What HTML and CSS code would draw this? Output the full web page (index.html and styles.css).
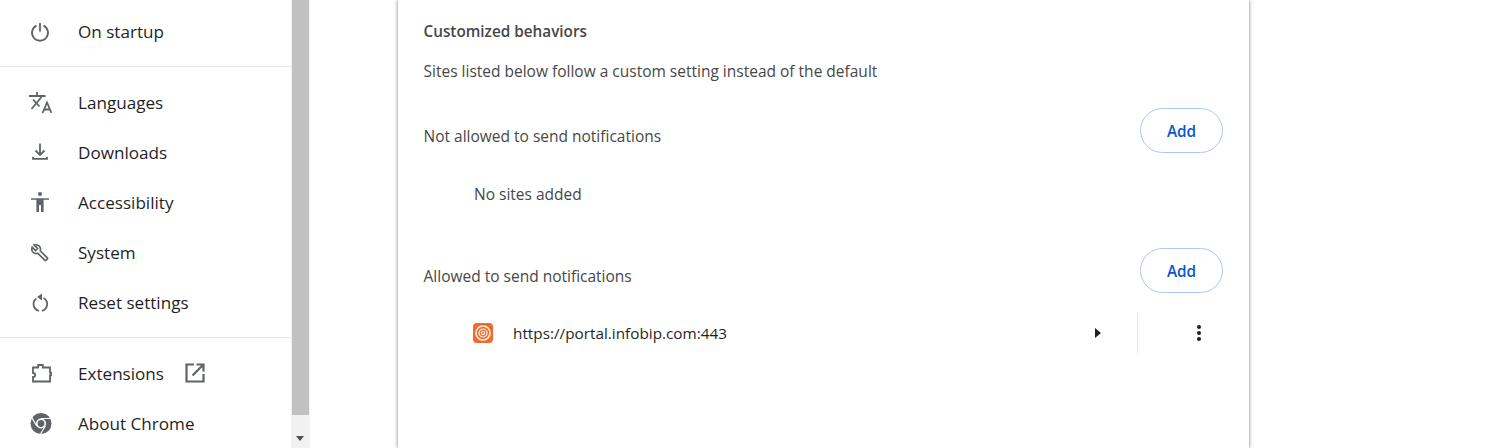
FILE: index.html
```html
<!DOCTYPE html>
<html>
<head>
<meta charset="UTF-8">
<title>Settings - Notifications</title>
<link rel="stylesheet" href="styles.css">
</head>
<body>
	<div id="container">

		<!-- left menu -->
		<div class="sidebar">
			<div class="menu-item">
				<svg class="menu-icon" viewBox="0 0 24 24"><path class="line" d="M8.400 6.600A8 8 0 1 0 15.600 6.600M12 4v8.500"/></svg>
				<span>On startup</span>
			</div>
			<hr class="menu-line">
			<div class="menu-item">
				<svg class="menu-icon" viewBox="0 0 24 24"><path class="line" d="M1 6h16.500M9 2v4M3.500 19L13.500 7M5 9.500l6.500 7"/><path class="line" d="M14.500 23L19 12.500L23.500 23M16 19.500h6"/></svg>
				<span>Languages</span>
			</div>
			<div class="menu-item">
				<svg class="menu-icon" viewBox="0 0 24 24"><path class="line" d="M12 3.500v11M7.500 10.500l4.500 4.500 4.500-4.500M5 17v1.900h14V17"/></svg>
				<span>Downloads</span>
			</div>
			<div class="menu-item">
				<svg class="menu-icon" viewBox="0 0 24 24"><circle class="solid" cx="12" cy="4" r="2"/><path class="solid" d="M3 8.200h18v1.600h-5.400V22h-2.600v-7h-2v7H8.400V9.800H3z"/></svg>
				<span>Accessibility</span>
			</div>
			<div class="menu-item">
				<svg class="menu-icon" viewBox="0 0 24 24"><path class="line" transform="translate(1 1) scale(.93)" d="M5.600 4.500l3.600 3.600-2.200 2.200-3.600-3.600c-.8 2-.4 4 1 5.400 1.400 1.400 3.300 1.700 5.100 1.100l7.600 7.600c.4.300.8.300 1.100 0l1.500-1.500c.3-.3.3-.8 0-1.100l-7.600-7.600c.6-1.800.3-3.700-1.100-5.100-1.400-1.400-3.400-1.800-5.400-.9z"/></svg>
				<span>System</span>
			</div>
			<div class="menu-item">
				<svg class="menu-icon" viewBox="0 0 24 24"><path class="line" d="M8.300 8.500A7 7 0 0 0 11 20.900M14 20.900A7 7 0 0 0 15.500 8"/><path class="solid" d="M14 3.500v7l-5-3.500z"/></svg>
				<span>Reset settings</span>
			</div>
			<hr class="menu-line">
			<div class="menu-item">
				<svg class="menu-icon" viewBox="0 0 24 24"><path class="line" d="M5 6.500h5.200V4h4.600v2.500H22v5.200h1v2.600h-1v6.200H5v-4.500c1.300 0 2.200-1 2.200-2s-.9-2-2.200-2z"/></svg>
				<span>Extensions</span>
				<svg class="menu-icon open-icon" viewBox="0 0 24 24"><path class="line thick" d="M11 3.500H3.500v17h17V13M13.500 3.500h7v7M20 4L9.500 14.500"/></svg>
			</div>
			<div class="menu-item">
				<svg class="menu-icon" viewBox="0 0 24 24"><circle class="solid" cx="13" cy="12.500" r="10.500"/><circle class="hole" cx="13" cy="12.500" r="5"/><circle class="solid" cx="13" cy="12.500" r="3.400"/><path class="cut" d="M13 7.500h10M8.700 15L3.800 6.500M17.300 15L12.500 23"/></svg>
				<span>About Chrome</span>
			</div>
		</div>

		<!-- page scrollbar of the menu -->
		<div class="scrollbar">
			<div class="scroll-thumb"></div>
			<div class="scroll-arrow"></div>
		</div>

		<div class="main">
			<div class="card">
				<div class="card-title">Customized behaviors</div>
				<div class="card-desc">Sites listed below follow a custom setting instead of the default</div>

				<div class="list-head first">
					<span>Not allowed to send notifications</span>
					<button class="add-btn">Add</button>
				</div>
				<div class="no-sites">No sites added</div>

				<div class="list-head second">
					<span>Allowed to send notifications</span>
					<button class="add-btn">Add</button>
				</div>
				<div class="site-row">
					<svg class="site-icon" viewBox="0 0 20 20">
						<rect class="site-bg" width="20" height="20" rx="4"/>
						<circle class="site-ring" cx="10" cy="10" r="7"/>
						<circle class="site-ring thin" cx="10" cy="10" r="4"/>
						<circle class="site-ring thin" cx="10" cy="10" r="1.600"/>
					</svg>
					<span class="site-url">https://portal.infobip.com:443</span>
					<div class="site-arrow"></div>
					<div class="site-sep"></div>
					<div class="site-more"><i></i><i></i><i></i></div>
				</div>
			</div>
		</div>

	</div>
</body>
</html>
```

FILE: styles.css
```css
body {
	margin: 0;
	padding: 0;
	background-color: #fff;
	font-family: "Open Sans", "Noto Sans", sans-serif;
	overflow: hidden;
}

#container {
	display: flex;
	height: 448px;
	overflow: hidden;
}

/* left menu */
.sidebar {
	width: 291px;
	flex-shrink: 0;
	padding-top: 6px;
	box-sizing: border-box;
}

.menu-item {
	display: flex;
	align-items: center;
	height: 50px;
	padding-left: 28px;
	font-size: 17.1px;
	font-weight: 500;
	color: #1f1f1f;
}

.menu-item span {
	margin-left: 26px;
}

.menu-icon {
	width: 24px;
	height: 24px;
	flex-shrink: 0;
}

.open-icon {
	margin-left: 19px;
}

.line {
	fill: none;
	stroke: #5f6368;
	stroke-width: 1.800;
}

.line.thick {
	stroke-width: 2.200;
}

.solid {
	fill: #5f6368;
}

.hole {
	fill: #fff;
}

.cut {
	fill: none;
	stroke: #fff;
	stroke-width: 1.200;
}

.menu-line {
	height: 1px;
	margin: 10px 0;
	border: none;
	background-color: #e8e8e8;
}

/* scrollbar */
.scrollbar {
	width: 19px;
	flex-shrink: 0;
	background-color: #f1f1f1;
}

.scroll-thumb {
	width: 17px;
	height: 415px;
	margin-left: 1px;
	background-color: #c1c1c1;
}

.scroll-arrow {
	width: 0;
	height: 0;
	margin: 21px 0 0 5px;
	border-left: 4.500px solid transparent;
	border-right: 4.500px solid transparent;
	border-top: 5px solid #505050;
}

/* content */
.main {
	flex: 1;
	padding-left: 88px;
}

.card {
	width: 851px;
	height: 448px;
	box-sizing: border-box;
	padding: 20px 26px 0 25.500px;
	background-color: #fff;
	box-shadow: 0 0 3px rgba(60, 64, 67, 0.5), 0 1px 5px rgba(60, 64, 67, 0.25);
	font-size: 15.500px;
	color: #474747;
}

.card-title {
	line-height: 22px;
	font-size: 15.300px;
	font-weight: 600;
}

.card-desc {
	line-height: 22px;
	margin-top: 18px;
}

.list-head {
	display: flex;
	justify-content: space-between;
	align-items: flex-start;
	height: 45px;
}

.list-head span {
	line-height: 22px;
	margin-top: 17px;
}

.list-head.first {
	margin-top: 26px;
}

.list-head.second {
	margin-top: 43px;
}

.add-btn {
	width: 83px;
	height: 45px;
	padding: 0;
	border: solid 1px #a8c7fa;
	border-radius: 23px;
	background-color: #fff;
	color: #0b57d0;
	font-family: inherit;
	font-size: 15.300px;
	font-weight: 600;
}

.no-sites {
	line-height: 22px;
	margin-top: 30px;
	padding-left: 50.500px;
}

.site-row {
	display: flex;
	align-items: center;
	height: 40px;
	margin-top: 20px;
	padding-left: 49.500px;
}

.site-icon {
	width: 20px;
	height: 20px;
	flex-shrink: 0;
}

.site-bg {
	fill: #f26b2c;
}

.site-ring {
	fill: none;
	stroke: #fff;
	stroke-width: 1.600;
	opacity: 0.9;
}

.site-ring.thin {
	stroke-width: 1.200;
}

.site-url {
	margin-left: 20px;
	font-size: 15.300px;
	color: #1f1f1f;
}

.site-arrow {
	width: 0;
	height: 0;
	margin-left: auto;
	border-top: 5.500px solid transparent;
	border-bottom: 5.500px solid transparent;
	border-left: 6px solid #1f1f1f;
}

.site-sep {
	width: 1px;
	height: 40px;
	margin-left: 36px;
	background-color: #e8e8e8;
}

.site-more {
	display: flex;
	flex-direction: column;
	gap: 2px;
	margin-left: 59px;
	margin-right: 22px;
}

.site-more i {
	display: block;
	width: 4px;
	height: 4px;
	border-radius: 50%;
	background-color: #1f1f1f;
}
```
